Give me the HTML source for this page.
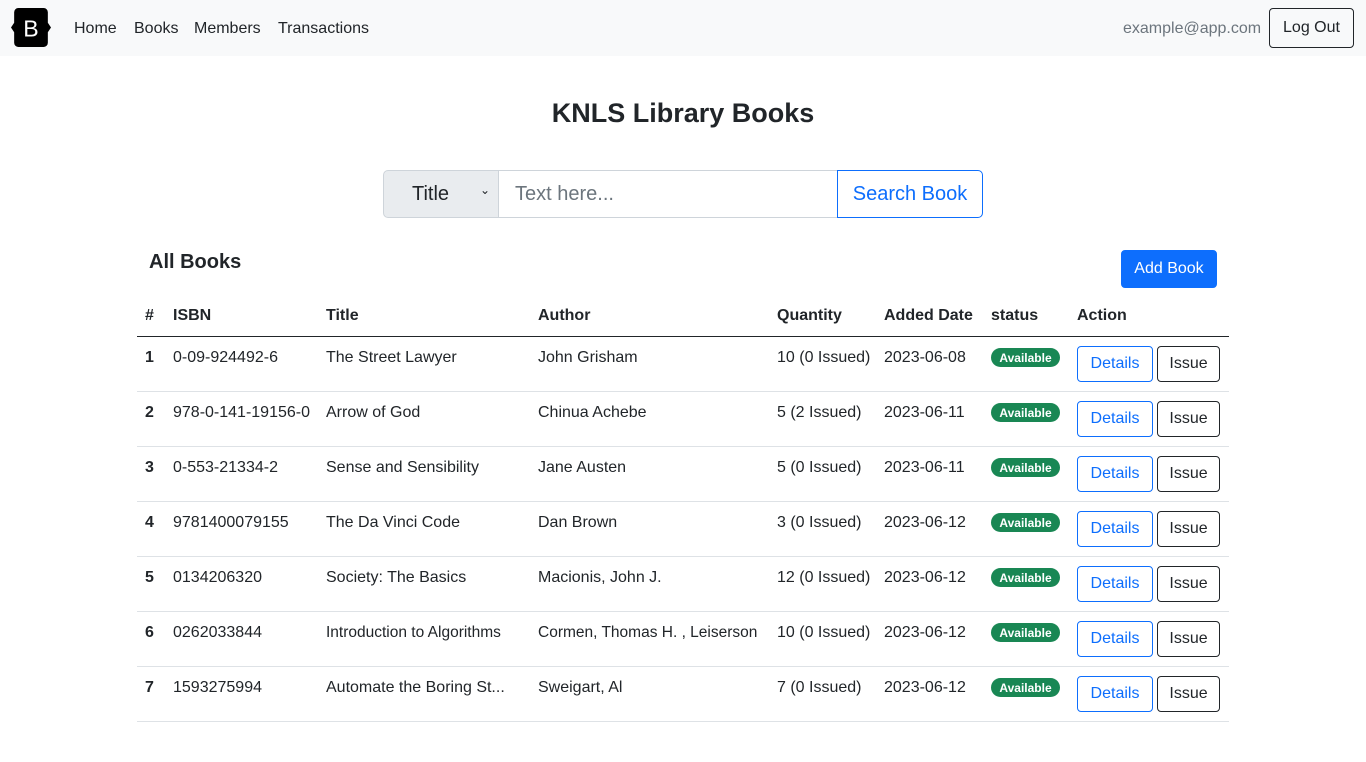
<!DOCTYPE html>
<html><head><meta charset="utf-8"><style>
*{box-sizing:border-box;margin:0;padding:0}
body{width:1366px;height:762px;background:#fff;font-family:"Liberation Sans",sans-serif;color:#212529;font-size:16px;position:relative;overflow:hidden}
.nav{position:absolute;left:0;top:0;width:1366px;height:56px;background:#f8f9fa}
.a{position:absolute;white-space:nowrap}
.logo{left:11px;top:8px;width:40px;height:39px}
.btn{position:absolute;border:1px solid;border-radius:4px;display:flex;align-items:center;justify-content:center;white-space:nowrap}
.row{position:absolute;left:137px;width:1092px;height:55px;border-bottom:1px solid #dee2e6}
.row .a{top:12px}
.badge{position:absolute;left:854px;top:11px;width:69px;height:19px;background:#198754;color:#fff;border-radius:10px;font-size:12px;font-weight:bold;display:flex;align-items:center;justify-content:center}
.det{left:940px;top:9px;width:76px;height:36px;border-color:#0d6efd;color:#0d6efd}
.iss{left:1020px;top:9px;width:63px;height:36px;border-color:#212529;color:#212529}
</style></head><body>
<div class="nav">
<svg class="a logo" viewBox="0 0 38 37"><path d="M7 0h24a4 4 0 0 1 4 4v10l3 4.5-3 4.5v10a4 4 0 0 1-4 4H7a4 4 0 0 1-4-4V23L0 18.5 3 14V4a4 4 0 0 1 4-4z" fill="#000"/><text x="19" y="27" fill="#fff" font-family="Liberation Sans" font-size="22" text-anchor="middle">B</text></svg>
<span class="a" style="left:74px;top:20px">Home</span>
<span class="a" style="left:134px;top:20px">Books</span>
<span class="a" style="left:194px;top:20px">Members</span>
<span class="a" style="left:278px;top:20px">Transactions</span>
<span class="a" style="left:1123px;top:20px;color:#6c757d">example@app.com</span>
<div class="btn" style="left:1269px;top:8px;width:85px;height:40px;border-color:#212529">Log Out</div>
</div>
<div class="a" style="left:0;width:1366px;text-align:center;top:98px;font-size:27px;font-weight:bold">KNLS Library Books</div>
<div style="position:absolute;left:383px;top:170px;width:600px;height:48px;font-size:20px">
<div style="position:absolute;left:0;top:0;width:116px;height:48px;background:#e9ecef;border:1px solid #ced4da;border-radius:5px 0 0 5px;padding:12px 0 0 28px">Title<span style="position:absolute;right:8px;top:12px;font-size:12px">&#8964;</span></div>
<div style="position:absolute;left:115px;top:0;width:340px;height:48px;border:1px solid #ced4da;padding:12px 16px;color:#6c757d">Text here...</div>
<div class="btn" style="left:454px;top:0;width:146px;height:48px;border-color:#0d6efd;color:#0d6efd;border-radius:0 5px 5px 0">Search Book</div>
</div>
<div class="a" style="left:149px;top:251px;font-size:20px;font-weight:bold">All Books</div>
<div class="btn" style="left:1121px;top:250px;width:96px;height:38px;background:#0d6efd;border-color:#0d6efd;color:#fff">Add Book</div>
<div class="row" style="top:298px;height:39px;border-bottom:1px solid #212529;font-weight:bold">
<span class="a" style="left:8px;top:9px">#</span><span class="a" style="left:36px;top:9px">ISBN</span><span class="a" style="left:189px;top:9px">Title</span><span class="a" style="left:401px;top:9px">Author</span><span class="a" style="left:640px;top:9px">Quantity</span><span class="a" style="left:747px;top:9px">Added Date</span><span class="a" style="left:854px;top:9px">status</span><span class="a" style="left:940px;top:9px">Action</span>
</div>
<div class="row" style="top:337px"><b class="a" style="left:8px">1</b><span class="a" style="left:36px">0-09-924492-6</span><span class="a" style="left:189px">The Street Lawyer</span><span class="a" style="left:401px">John Grisham</span><span class="a" style="left:640px">10 (0 Issued)</span><span class="a" style="left:747px">2023-06-08</span><div class="badge">Available</div><div class="btn det">Details</div><div class="btn iss">Issue</div></div>
<div class="row" style="top:392px"><b class="a" style="left:8px">2</b><span class="a" style="left:36px">978-0-141-19156-0</span><span class="a" style="left:189px">Arrow of God</span><span class="a" style="left:401px">Chinua Achebe</span><span class="a" style="left:640px">5 (2 Issued)</span><span class="a" style="left:747px">2023-06-11</span><div class="badge">Available</div><div class="btn det">Details</div><div class="btn iss">Issue</div></div>
<div class="row" style="top:447px"><b class="a" style="left:8px">3</b><span class="a" style="left:36px">0-553-21334-2</span><span class="a" style="left:189px">Sense and Sensibility</span><span class="a" style="left:401px">Jane Austen</span><span class="a" style="left:640px">5 (0 Issued)</span><span class="a" style="left:747px">2023-06-11</span><div class="badge">Available</div><div class="btn det">Details</div><div class="btn iss">Issue</div></div>
<div class="row" style="top:502px"><b class="a" style="left:8px">4</b><span class="a" style="left:36px">9781400079155</span><span class="a" style="left:189px">The Da Vinci Code</span><span class="a" style="left:401px">Dan Brown</span><span class="a" style="left:640px">3 (0 Issued)</span><span class="a" style="left:747px">2023-06-12</span><div class="badge">Available</div><div class="btn det">Details</div><div class="btn iss">Issue</div></div>
<div class="row" style="top:557px"><b class="a" style="left:8px">5</b><span class="a" style="left:36px">0134206320</span><span class="a" style="left:189px">Society: The Basics</span><span class="a" style="left:401px">Macionis, John J.</span><span class="a" style="left:640px">12 (0 Issued)</span><span class="a" style="left:747px">2023-06-12</span><div class="badge">Available</div><div class="btn det">Details</div><div class="btn iss">Issue</div></div>
<div class="row" style="top:612px"><b class="a" style="left:8px">6</b><span class="a" style="left:36px">0262033844</span><span class="a" style="left:189px;font-size:15.5px">Introduction to Algorithms</span><span class="a" style="left:401px;font-size:15.5px">Cormen, Thomas H. , Leiserson</span><span class="a" style="left:640px">10 (0 Issued)</span><span class="a" style="left:747px">2023-06-12</span><div class="badge">Available</div><div class="btn det">Details</div><div class="btn iss">Issue</div></div>
<div class="row" style="top:667px"><b class="a" style="left:8px">7</b><span class="a" style="left:36px">1593275994</span><span class="a" style="left:189px">Automate the Boring St...</span><span class="a" style="left:401px">Sweigart, Al</span><span class="a" style="left:640px">7 (0 Issued)</span><span class="a" style="left:747px">2023-06-12</span><div class="badge">Available</div><div class="btn det">Details</div><div class="btn iss">Issue</div></div>
</body></html>
